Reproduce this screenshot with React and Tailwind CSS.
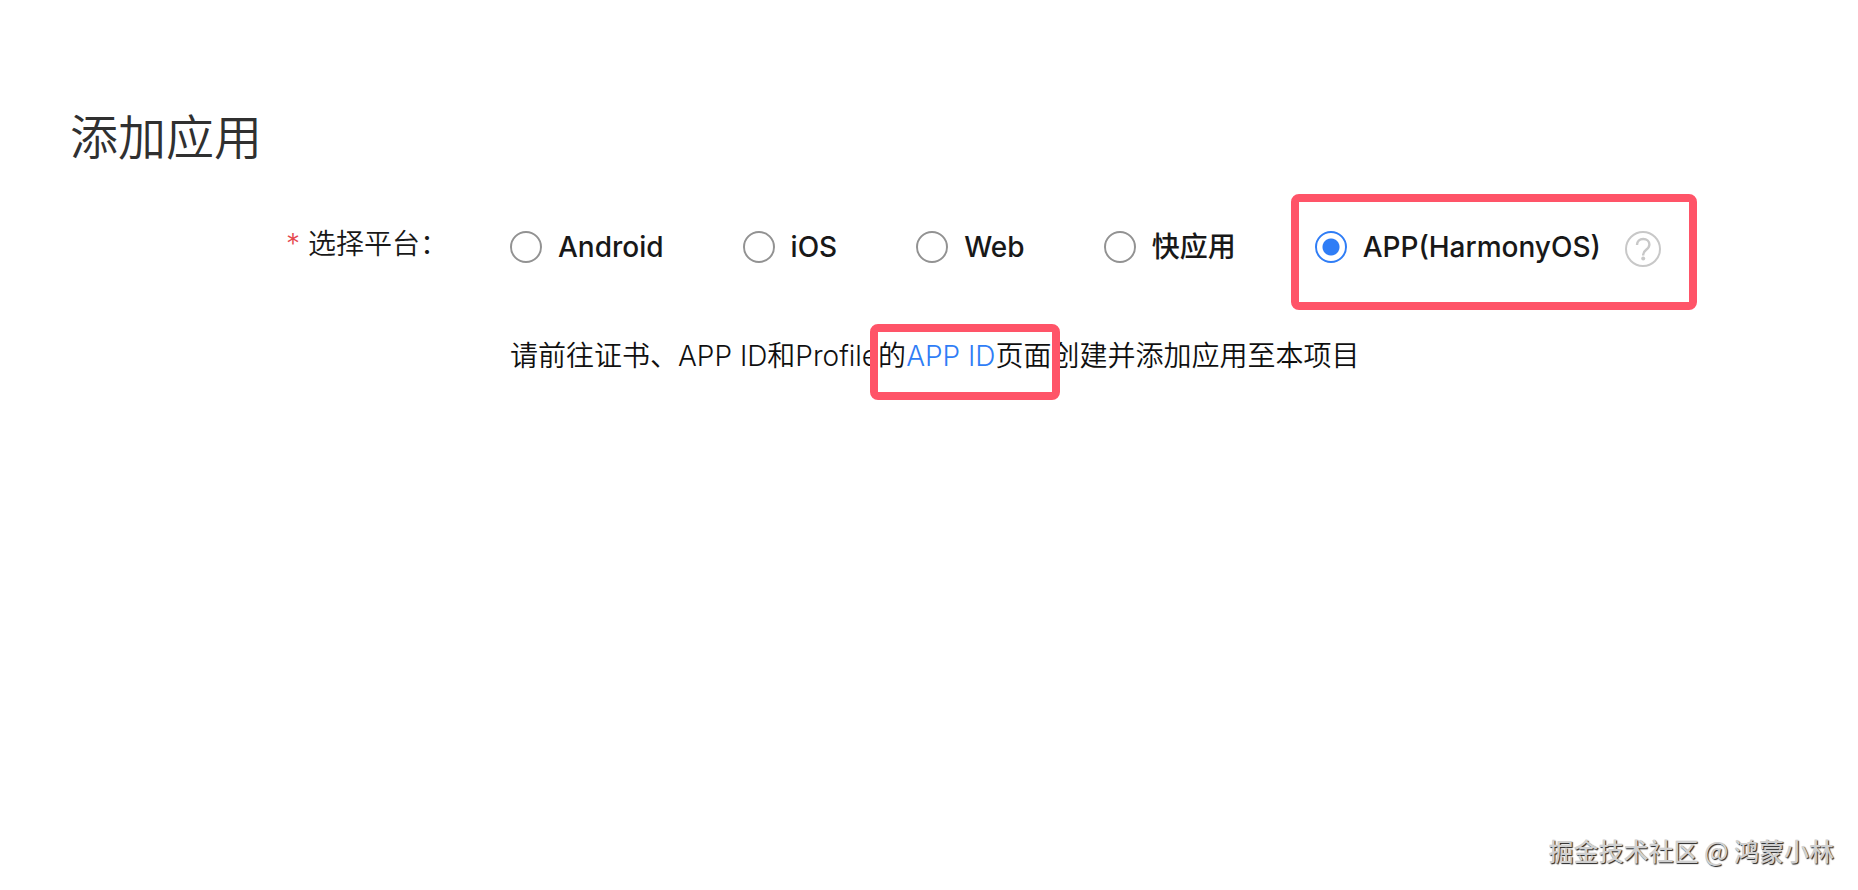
import { useState } from "react";

const platforms = [
  { id: "android", label: "Android" },
  { id: "ios", label: "iOS" },
  { id: "web", label: "Web" },
  { id: "quick", label: "快应用" },
  { id: "harmony", label: "APP(HarmonyOS)", help: true, marked: true },
];

const HelpIcon = () => (
  <svg viewBox="0 0 36 36" fill="none" stroke="#c8c8c8" className="h-9 w-9" aria-hidden="true">
    <circle cx="18" cy="18" r="17" strokeWidth="2" />
    <path
      d="M12 14c0-3.8 2.6-6 6.2-6s6.2 2.4 6.2 5.6c0 2.4-1.4 3.8-3.2 5.2-2 1.5-3 2.6-3 4.7v1"
      strokeWidth="2.4"
    />
    <circle cx="18.2" cy="27.6" r="2" fill="#c8c8c8" stroke="none" />
  </svg>
);

const Mark = ({ className }) => (
  <span
    aria-hidden="true"
    className={`pointer-events-none absolute rounded-lg border-8 border-[#ff5468] ${className}`}
  />
);

const PlatformOption = ({ option, checked, onSelect }) => (
  <div className="relative flex items-center">
    <label className="flex items-center gap-4 whitespace-nowrap font-medium">
      <input
        type="radio"
        name="platform"
        value={option.id}
        checked={checked}
        onChange={() => onSelect(option.id)}
        className="h-8 w-8 appearance-none rounded-full border-2 border-[#929292] bg-white checked:border-[#2f7df6] checked:bg-[radial-gradient(circle,#2f7df6_8px,white_9px)]"
      />
      {option.label}
    </label>
    {option.help && (
      <button type="button" aria-label={option.label} className="ml-6 mt-1">
        <HelpIcon />
      </button>
    )}
    {option.marked && <Mark className="-left-6 -right-9 -top-[33px] -bottom-[43px]" />}
  </div>
);

const App = () => {
  const [platform, setPlatform] = useState("harmony");

  return (
    <div className="flex min-h-screen flex-col bg-white font-[family-name:Inter,'Noto_Sans_CJK_SC',sans-serif] text-[28px] leading-10 text-[#181818]">
      <main className="flex-1 px-[70px] pt-[102px]">
        <h1 className="text-5xl leading-[72px] font-[350] text-[#303030]">添加应用</h1>

        <form className="mt-[50px] grid grid-cols-[224px_1fr] gap-x-4 pl-[200px]">
          <div id="platform-label" className="flex gap-2 pl-4 whitespace-nowrap font-[350]">
            <span className="text-[#e5484d]">*</span>
            <span>选择平台：</span>
          </div>
          <div
            role="radiogroup"
            aria-labelledby="platform-label"
            className="flex items-center gap-[79px] pt-[3px]"
          >
            {platforms.map((option) => (
              <PlatformOption
                key={option.id}
                option={option}
                checked={platform === option.id}
                onSelect={setPlatform}
              />
            ))}
          </div>

          <p className="col-start-2 mt-[69px] font-[350] text-[#101010]">
            请前往证书、APP ID和Profile
            <span className="relative">
              的
              <a href="#app-id" className="text-[#2f7df6]">
                APP ID
              </a>
              页面
              <Mark className="-inset-x-2 -top-[15px] -bottom-[27px]" />
            </span>
            创建并添加应用至本项目
          </p>
        </form>
      </main>

      <footer className="flex justify-end px-6 pb-[18px]">
        <span className="font-[family-name:'Noto_Sans_CJK_SC',sans-serif] text-[25px] font-medium leading-[44px] text-[#d0d0d0] [text-shadow:1px_1px_1px_#222]">
          掘金技术社区 @ 鸿蒙小林
        </span>
      </footer>
    </div>
  );
};

export default App;
